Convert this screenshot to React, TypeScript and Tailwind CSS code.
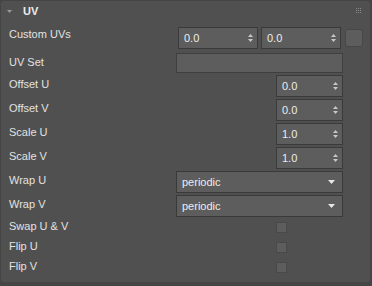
import type { ReactNode } from "react";

function SpinArrows() {
  return (
    <svg width="5" height="8" viewBox="0 0 5 8" className="shrink-0">
      <polygon points="0,3 2.5,0 5,3" fill="#c8c8c8" />
      <polygon points="0,5 5,5 2.5,8" fill="#c8c8c8" />
    </svg>
  );
}

function Spin({ value, width }: { value: string; width: string }) {
  return (
    <div
      className={`flex h-[22px] ${width} items-center justify-between border border-[#3a3a3a] bg-[#5d5d5d] pl-[5px] pr-[4px] text-[#ececec]`}
    >
      <span>{value}</span>
      <SpinArrows />
    </div>
  );
}

function Dropdown({ value }: { value: string }) {
  return (
    <div className="flex h-[22px] w-[167px] items-center justify-between border border-[#3a3a3a] bg-[#5d5d5d] pl-[5px] pr-[7px] text-[#ececec]">
      <span>{value}</span>
      <svg width="7" height="4" viewBox="0 0 7 4">
        <polygon points="0,0 7,0 3.5,4" fill="#e6e6e6" />
      </svg>
    </div>
  );
}

function Row({
  label,
  height,
  labelPad,
  children,
}: {
  label: string;
  height: string;
  labelPad: string;
  children: ReactNode;
}) {
  return (
    <div className={`flex ${height} items-start`}>
      <div className={`w-[167px] shrink-0 ${labelPad} text-[#e2e2e2]`}>
        {label}
      </div>
      <div className="flex w-[167px]">{children}</div>
    </div>
  );
}

function CheckRow({ label }: { label: string }) {
  return (
    <Row label={label} height="h-[20px]" labelPad="pt-[3px]">
      <div className="pl-[100px] pt-[5px]">
        <div className="h-[11px] w-[11px] border border-[#494949] bg-[#5d5d5d]" />
      </div>
    </Row>
  );
}

export default function App() {
  return (
    <div
      className="h-[286px] w-[372px] bg-[#454545] pl-[1px] pt-[1px] text-[11px] leading-[13px]"
      style={{ fontFamily: '"Liberation Sans", Arial, sans-serif' }}
    >
      <div className="relative h-[281px] w-[369px] rounded-[3px] bg-[#505050]">
        {/* header */}
        <div className="flex h-[20px] items-center pl-[6px]">
          <svg width="5" height="3" viewBox="0 0 5 3">
            <polygon points="0,0 5,0 2.5,3" fill="#9a9a9a" />
          </svg>
          <span className="ml-[11px] font-bold text-[#ececec]">UV</span>
        </div>
        <svg
          width="5"
          height="5"
          viewBox="0 0 5 5"
          className="absolute right-[9px] top-[7px]"
        >
          {[0, 2, 4].map((y) =>
            [0, 2, 4].map((x) => (
              <rect key={`${x}-${y}`} x={x} y={y} width="1" height="1" fill="#8a8a8a" />
            ))
          )}
        </svg>

        <div className="mt-[6px] flex flex-col pl-[8px]">
          <Row label="Custom UVs" height="h-[22px]" labelPad="pt-[1px]">
            <div className="ml-[2px] flex items-center gap-[3px]">
              <Spin value="0.0" width="w-[80px]" />
              <Spin value="0.0" width="w-[80px]" />
              <div className="ml-[1px] h-[18px] w-[18px] shrink-0 rounded-[3px] border border-[#474747] bg-[#5d5d5d]" />
            </div>
          </Row>

          <div className="mt-[4px]">
            <Row label="UV Set" height="h-[20px]" labelPad="pt-[3px]">
              <div className="h-[20px] w-[167px] border border-[#3f3f3f] bg-[#5d5d5d]" />
            </Row>
          </div>

          <div className="mt-[2px] flex flex-col gap-[2px]">
            {[
              ["Offset U", "0.0"],
              ["Offset V", "0.0"],
              ["Scale U", "1.0"],
              ["Scale V", "1.0"],
            ].map(([label, value]) => (
              <Row key={label} label={label} height="h-[22px]" labelPad="pt-[3px]">
                <div className="pl-[100px]">
                  <Spin value={value} width="w-[67px]" />
                </div>
              </Row>
            ))}
            <Row label="Wrap U" height="h-[22px]" labelPad="pt-[3px]">
              <Dropdown value="periodic" />
            </Row>
            <Row label="Wrap V" height="h-[22px]" labelPad="pt-[3px]">
              <Dropdown value="periodic" />
            </Row>
          </div>

          <CheckRow label="Swap U & V" />
          <CheckRow label="Flip U" />
          <CheckRow label="Flip V" />
        </div>
      </div>
    </div>
  );
}
